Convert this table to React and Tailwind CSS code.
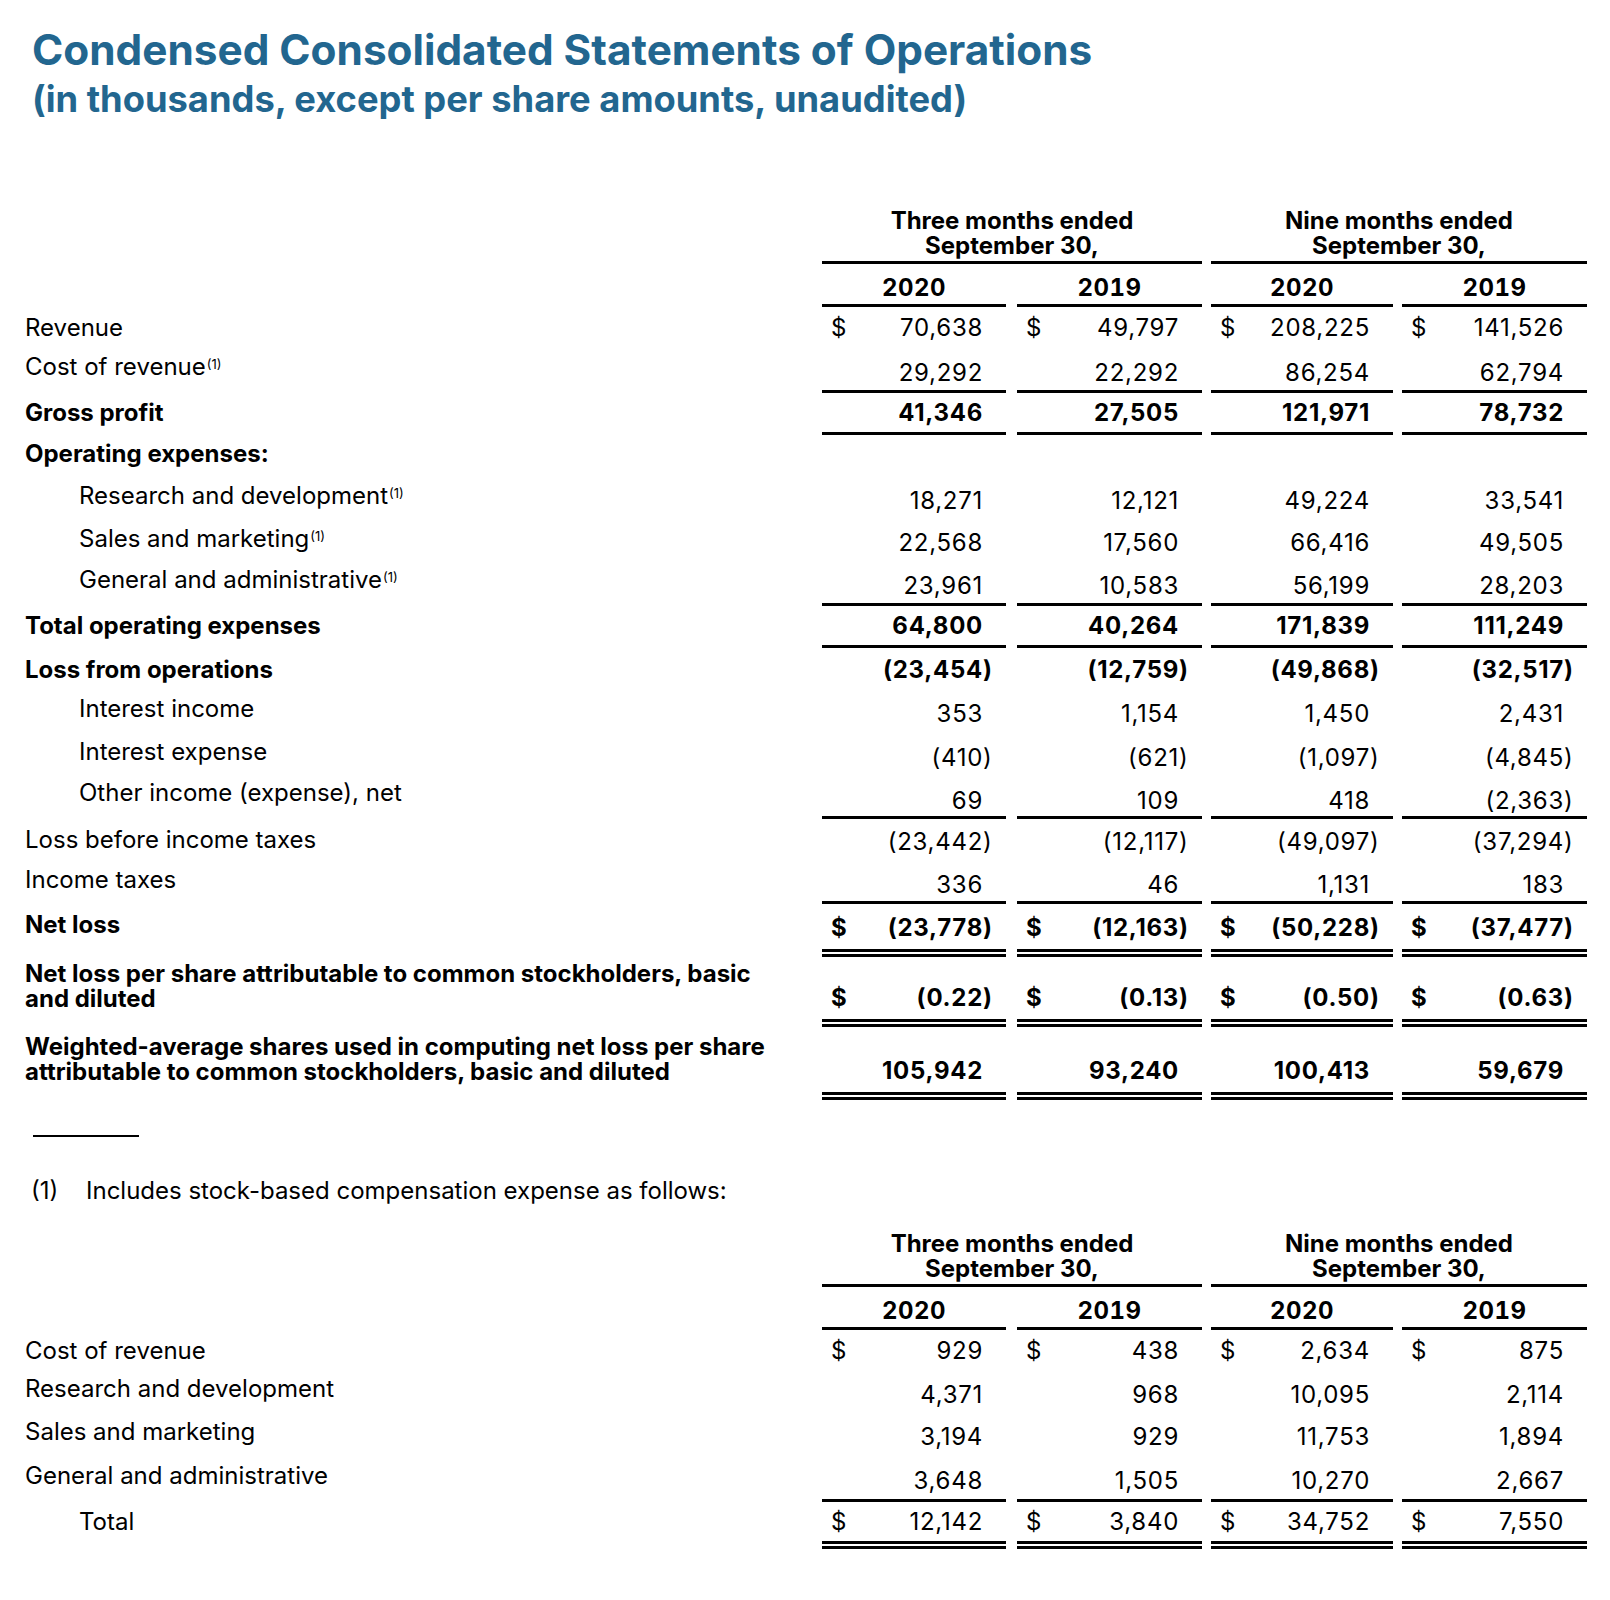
import React from "react";

const SINGLE = "border-b-[3px] border-black";
const DOUBLE = "border-b-[8px] border-double border-black";

const COLS = [
  "w-[184px]",
  "ml-[11px] w-[185px]",
  "ml-[9px] w-[182px]",
  "ml-[9px] w-[185px]",
];

const incomeRows = [
  { label: ["Revenue"], vals: ["70,638", "49,797", "208,225", "141,526"], dollar: true, h: "h-[41px]", np: "pb-[8px]", lp: "pb-[8px]" },
  { label: ["Cost of revenue"], sup: true, vals: ["29,292", "22,292", "86,254", "62,794"], line: SINGLE, h: "h-[45px]", np: "pb-[5px]", lp: "pb-[14px]" },
  { label: ["Gross profit"], bold: true, vals: ["41,346", "27,505", "121,971", "78,732"], line: SINGLE, h: "h-[42px]", np: "pb-[7px]", lp: "pb-[10px]" },
  { label: ["Operating expenses:"], bold: true, h: "h-[35px]", lp: "pb-[4px]" },
  { label: ["Research and development"], sup: true, indent: true, vals: ["18,271", "12,121", "49,224", "33,541"], h: "h-[50px]", np: "pb-[7px]", lp: "pb-[12px]" },
  { label: ["Sales and marketing"], sup: true, indent: true, vals: ["22,568", "17,560", "66,416", "49,505"], h: "h-[42px]", np: "pb-[7px]", lp: "pb-[11px]" },
  { label: ["General and administrative"], sup: true, indent: true, vals: ["23,961", "10,583", "56,199", "28,203"], line: SINGLE, h: "h-[44px]", np: "pb-[5px]", lp: "pb-[14px]" },
  { label: ["Total operating expenses"], bold: true, vals: ["64,800", "40,264", "171,839", "111,249"], line: SINGLE, h: "h-[42px]", np: "pb-[7px]", lp: "pb-[10px]" },
  { label: ["Loss from operations"], bold: true, vals: ["(23,454)", "(12,759)", "(49,868)", "(32,517)"], h: "h-[42px]", np: "pb-[8px]", lp: "pb-[8px]" },
  { label: ["Interest income"], indent: true, vals: ["353", "1,154", "1,450", "2,431"], h: "h-[43px]", np: "pb-[7px]", lp: "pb-[12px]" },
  { label: ["Interest expense"], indent: true, vals: ["(410)", "(621)", "(1,097)", "(4,845)"], h: "h-[43px]", np: "pb-[6px]", lp: "pb-[12px]" },
  { label: ["Other income (expense), net"], indent: true, vals: ["69", "109", "418", "(2,363)"], line: SINGLE, h: "h-[43px]", np: "pb-[3px]", lp: "pb-[14px]" },
  { label: ["Loss before income taxes"], vals: ["(23,442)", "(12,117)", "(49,097)", "(37,294)"], h: "h-[42px]", np: "pb-[7px]", lp: "pb-[9px]" },
  { label: ["Income taxes"], vals: ["336", "46", "1,131", "183"], line: SINGLE, h: "h-[43px]", np: "pb-[4px]", lp: "pb-[12px]" },
  { label: ["Net loss"], bold: true, dollar: true, vals: ["(23,778)", "(12,163)", "(50,228)", "(37,477)"], line: DOUBLE, h: "h-[53px]", np: "pb-[9px]", lp: "pb-[20px]" },
  {
    label: ["Net loss per share attributable to common stockholders, basic", "and diluted"],
    bold: true,
    dollar: true,
    vals: ["(0.22)", "(0.13)", "(0.50)", "(0.63)"],
    line: DOUBLE,
    h: "h-[70px]",
    np: "pb-[9px]",
    lp: "pb-[16px]",
  },
  {
    label: ["Weighted-average shares used in computing net loss per share", "attributable to common stockholders, basic and diluted"],
    bold: true,
    vals: ["105,942", "93,240", "100,413", "59,679"],
    line: DOUBLE,
    h: "h-[73px]",
    np: "pb-[9px]",
    lp: "pb-[16px]",
  },
];

const sbcRows = [
  { label: ["Cost of revenue"], dollar: true, vals: ["929", "438", "2,634", "875"], h: "h-[41px]", np: "pb-[8px]", lp: "pb-[8px]" },
  { label: ["Research and development"], vals: ["4,371", "968", "10,095", "2,114"], h: "h-[43px]", np: "pb-[7px]", lp: "pb-[13px]" },
  { label: ["Sales and marketing"], vals: ["3,194", "929", "11,753", "1,894"], h: "h-[43px]", np: "pb-[8px]", lp: "pb-[13px]" },
  { label: ["General and administrative"], vals: ["3,648", "1,505", "10,270", "2,667"], line: SINGLE, h: "h-[45px]", np: "pb-[6px]", lp: "pb-[14px]" },
  { label: ["Total"], indent: true, dollar: true, vals: ["12,142", "3,840", "34,752", "7,550"], line: DOUBLE, h: "h-[47px]", np: "pb-[7px]", lp: "pb-[15px]" },
];

function Amount({ value }) {
  const neg = value.startsWith("(");
  const inner = neg ? value.slice(0, -1) : value;
  return (
    <span className="flex items-end">
      <span className="tracking-[0.03em]">{inner}</span>
      <span className="inline-block w-[8px] text-left">{neg ? ")" : ""}</span>
    </span>
  );
}

function Row({ row }) {
  const { label, sup, bold, indent, vals, dollar, line, h, np, lp } = row;
  return (
    <div className={`flex items-end ${h} ${bold ? "font-bold" : "font-normal"}`}>
      <div className={`w-[822px] shrink-0 ${indent ? "pl-[79px]" : "pl-[25px]"} ${lp}`}>
        {label.map((l, i) => (
          <div key={i}>
            {l}
            {sup && <sup className="ml-[1px] text-[13px] font-normal">(1)</sup>}
          </div>
        ))}
      </div>
      {vals &&
        vals.map((v, i) => (
          <div key={i} className={`${COLS[i]} shrink-0 ${line || ""}`}>
            <div className={`flex justify-between pl-[9px] pr-[15px] ${np}`}>
              <span>{dollar ? "$" : ""}</span>
              <Amount value={v} />
            </div>
          </div>
        ))}
    </div>
  );
}

function Header() {
  return (
    <>
      <div className="flex h-[59px] items-end font-bold">
        <div className="w-[822px] shrink-0" />
        <div className={`w-[380px] shrink-0 pb-[3px] text-center ${SINGLE}`}>
          <div>Three months ended</div>
          <div>September 30,</div>
        </div>
        <div className={`ml-[9px] w-[376px] shrink-0 pb-[3px] text-center ${SINGLE}`}>
          <div>Nine months ended</div>
          <div>September 30,</div>
        </div>
      </div>
      <div className="flex h-[43px] items-end font-bold">
        <div className="w-[822px] shrink-0" />
        {["2020", "2019", "2020", "2019"].map((y, i) => (
          <div key={i} className={`${COLS[i]} shrink-0 pb-[4px] text-center tracking-[0.02em] tabular-nums ${SINGLE}`}>
            {y}
          </div>
        ))}
      </div>
    </>
  );
}

export default function App() {
  return (
    <div className="w-[1610px] bg-white pb-[52px] font-['Inter',sans-serif] text-[24px] leading-[25px] text-black">
      <div className="pl-[32px] pt-[25px] text-[#22668f]">
        <h1 className="text-[42.3px] font-bold leading-[50px]">
          Condensed Consolidated Statements of Operations
        </h1>
        <h2 className="mt-[3px] text-[36.3px] font-bold leading-[42px]">
          (in thousands, except per share amounts, unaudited)
        </h2>
      </div>

      <div className="mt-[85px]">
        <Header />
        {incomeRows.map((r, i) => (
          <Row key={i} row={r} />
        ))}
      </div>

      <div className="ml-[33px] mt-[35px] h-[2px] w-[106px] bg-black" />

      <div className="mt-[41px] flex pl-[31px]">
        <span className="w-[55px]">(1)</span>
        <span>Includes stock-based compensation expense as follows:</span>
      </div>

      <div className="mt-[25px]">
        <Header />
        {sbcRows.map((r, i) => (
          <Row key={i} row={r} />
        ))}
      </div>
    </div>
  );
}
